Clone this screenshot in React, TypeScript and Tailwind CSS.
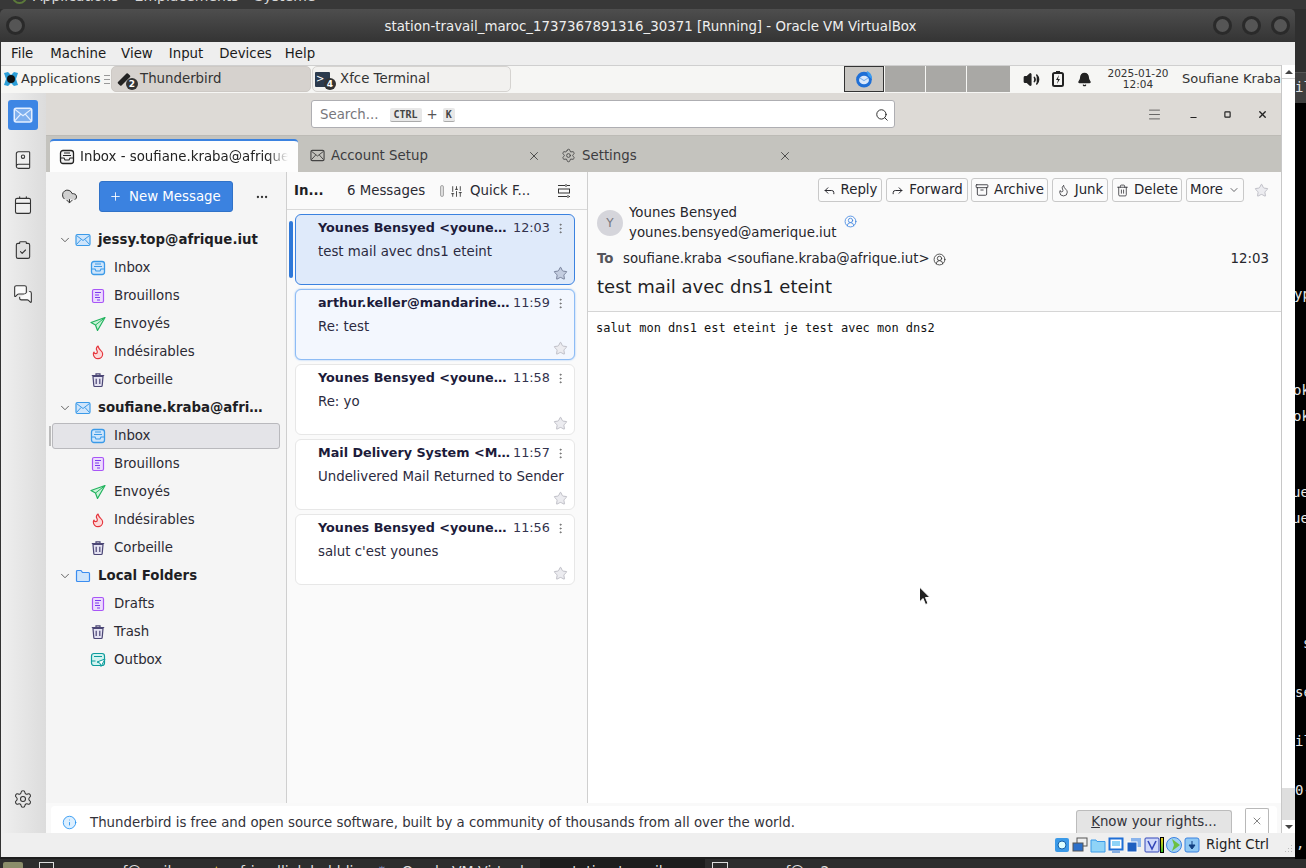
import React from 'react';
import {
  Archive, Bell, BookUser, Calendar, ChevronDown, ClipboardCheck, CloudDownload, CircleUserRound, Flame, Forward,
  Info, Menu, MessagesSquare, Minus, MoreHorizontal, MoreVertical, Plus, Reply, Search, Settings, SlidersHorizontal,
  Square, Star, Trash2, Volume2, X,
} from 'lucide-react';

const MailIcon: React.FC<{ size?: number; stroke?: string; fill?: string }> = ({ size = 16, stroke = '#3b9ae8', fill = '#cfe5fb' }) => (
  <svg width={size} height={size} viewBox="0 0 16 16" fill="none" className="shrink-0">
    <rect x="1" y="2.5" width="14" height="11" rx="1.5" fill={fill} stroke={stroke} strokeWidth="1.2" />
    <path d="M1.5 3.5 8 8.5l6.5-5M1.5 12.5 6 7.5M14.5 12.5 10 7.5" stroke={stroke} />
  </svg>
);

const InboxIcon: React.FC<{ stroke?: string; fill?: string }> = ({ stroke = '#3b9ae8', fill = '#cfe5fb' }) => (
  <svg width="16" height="16" viewBox="0 0 16 16" fill="none" className="shrink-0">
    <rect x="1.5" y="1.5" width="13" height="13" rx="2.5" fill={fill} stroke={stroke} strokeWidth="1.3" />
    <path d="M1.5 9h3.5l1 2h4l1-2h3.5M4 6.5h8M5 4h6" stroke={stroke} strokeWidth="1.1" />
  </svg>
);

const DraftIcon = () => (
  <svg width="16" height="16" viewBox="0 0 16 16" fill="none" className="shrink-0">
    <rect x="2.5" y="1.5" width="11" height="13" rx="1.5" fill="#ecdcfd" stroke="#a855f7" strokeWidth="1.2" />
    <path d="M5 4.5h6M5 7h4M5 9.5h5M7 12h3" stroke="#7c3aed" />
  </svg>
);

const SentIcon = () => (
  <svg width="16" height="16" viewBox="0 0 16 16" fill="none" className="shrink-0">
    <path d="M15 1.5 1 6.5l4.5 2.5L7.5 14.5z" fill="#c9f2d8" stroke="#22b35e" strokeWidth="1.2" strokeLinejoin="round" />
    <path d="M15 1.5 5.5 9" stroke="#22b35e" />
  </svg>
);

const JunkIcon = () => <Flame size={16} strokeWidth={1.7} color="#e5343b" fill="#fdd9d9" className="shrink-0" />;

const TrashIcon = () => (
  <svg width="16" height="16" viewBox="0 0 16 16" fill="none" className="shrink-0">
    <path d="M3 4.5h10l-.8 9a1 1 0 0 1-1 1H4.800a1 1 0 0 1-1-1z" fill="#e4e2f2" stroke="#4b4675" strokeWidth="1.2" />
    <path d="M1.800 3.500h12.400M6 3.500V1.800h4v1.700M6.200 6.800v5.200M9.800 6.800v5.200" stroke="#4b4675" strokeWidth="1.2" />
  </svg>
);

const OutboxIcon = () => (
  <svg width="16" height="16" viewBox="0 0 16 16" fill="none" className="shrink-0">
    <rect x="1.5" y="1.5" width="13" height="12" rx="2.5" fill="#d3f3f0" stroke="#0d9c9c" strokeWidth="1.2" />
    <path d="M1.5 9h4M4 4.5h8" stroke="#0d9c9c" />
    <path d="M15 7 7 10l3 1.2 1 3.3z" fill="#fff" stroke="#0d9c9c" strokeLinejoin="round" />
  </svg>
);

const FolderIcon = () => (
  <svg width="16" height="16" viewBox="0 0 16 16" fill="none" className="shrink-0">
    <path d="M1.500 3.500a1 1 0 0 1 1-1h3.500l1.500 2h6a1 1 0 0 1 1 1v7a1 1 0 0 1-1 1h-11a1 1 0 0 1-1-1z" fill="#cfe5fb" stroke="#3b8df0" strokeWidth="1.2" />
  </svg>
);

const ThunderbirdIcon = () => (
  <svg width="18" height="18" viewBox="0 0 16 16" className="shrink-0">
    <circle cx="8" cy="8.500" r="7" fill="#1f6fd6" />
    <path d="M10.500 .8c2.800 1 5 3.800 4.500 7.200L11.500 5z" fill="#3a9af0" />
    <ellipse cx="8" cy="8.800" rx="4.400" ry="3.800" fill="#dbe9fb" />
    <path d="M4.200 7 8 9.500 11.800 7" fill="none" stroke="#7fb2ea" />
  </svg>
);

const FolderRow: React.FC<{ icon: React.ReactNode; label: string; selected?: boolean }> = ({ icon, label, selected }) => (
  <div className={`flex items-center ${selected ? 'h-[26px] bg-[#e4e4e8] rounded-[3px] border border-[#b9b9bd] ml-[6px] mr-[6px] pl-[38px]' : 'h-[28px] pl-[45px]'}`}>
    <span className="w-[15px] flex justify-center mr-[9px] -ml-[1px]">{icon}</span>
    <span className="text-[13.33px] text-[#2b2a33]">{label}</span>
  </div>
);

const AccountRow: React.FC<{ icon: React.ReactNode; label: string }> = ({ icon, label }) => (
  <div className="h-[28px] flex items-center pl-[12px]">
    <ChevronDown size={14} strokeWidth={1.4} color="#444" className="mr-[3px]" />
    <span className="w-[16px] mr-[7px] flex">{icon}</span>
    <span className="text-[13.33px] font-bold text-[#1e1e24] whitespace-nowrap">{label}</span>
  </div>
);

const MessageCard: React.FC<{ from: string; time: string; subject: string; variant?: 'selected' | 'related' }> = ({ from, time, subject, variant }) => (
  <div
    className={`h-[71px] rounded-[6px] border pl-[22px] pr-[8px] pt-[4px] flex flex-col ${
      variant === 'selected'
        ? 'bg-[#dfeafa] border-[#3b82e0]'
        : variant === 'related'
          ? 'bg-[#f3f7fe] border-[#8dbcf5] shadow-[0_0_2px_#8dbcf5]'
          : 'bg-white border-[#e7e7e7]'
    }`}
  >
    <div className="h-[18px] flex items-center">
      <span className="w-[194px] shrink-0 whitespace-nowrap text-[12.75px] font-bold text-[#1c1b3a]">{from}</span>
      <span className="ml-[1px] text-[12.8px] text-[#33334d]">{time}</span>
      <MoreVertical size={13} strokeWidth={1.5} color="#666" className="ml-auto -mr-[1px]" />
    </div>
    <div className="mt-[6px] text-[13.33px] leading-[18px] text-[#2b2a40] whitespace-nowrap">{subject}</div>
    <div className="mt-auto mb-[3px] -mr-[2px] flex justify-end">
      <Star size={15} strokeWidth={1.3} color={variant === 'selected' ? '#66708a' : '#b4b4bc'} fill={variant === 'selected' ? '#c3cde0' : '#ececf0'} />
    </div>
  </div>
);

const HeaderButton: React.FC<{ icon?: React.ReactNode; label: string; width: string; after?: React.ReactNode }> = ({ icon, label, width, after }) => (
  <div className={`${width} h-[24px] border border-[#c9c9c9] rounded-[3px] bg-[#fbfbfb] flex items-center justify-center gap-[5px] text-[13.33px] text-[#26262c]`}>
    {icon}
    <span>{label}</span>
    {after}
  </div>
);

const VBoxIcon: React.FC<{ children: React.ReactNode }> = ({ children }) => (
  <svg width="16" height="16" viewBox="0 0 16 16" fill="none" className="shrink-0">{children}</svg>
);

const termLines: { gap: string; text: string; indent?: string }[] = [
  { gap: 'mt-[183px]', text: 'yp', indent: '-ml-[1px]' },
  { gap: 'mt-[79px]', text: 'ok', indent: '-ml-[2px]' },
  { gap: 'mt-[9px]', text: 'ok', indent: '-ml-[2px]' },
  { gap: 'mt-[59px]', text: 'ue', indent: '-ml-[3px]' },
  { gap: 'mt-[9px]', text: 'ue', indent: '-ml-[3px]' },
  { gap: 'mt-[108px]', text: 's', indent: 'ml-[8px]' },
  { gap: 'mt-[32px]', text: 'se' },
  { gap: 'mt-[32px]', text: 'il' },
  { gap: 'mt-[32px]', text: '0-' },
  { gap: 'mt-[36px]', text: ',', indent: 'ml-[1px]' },
];

export default function App() {
  return (
    <div className="w-[1306px] h-[868px] overflow-hidden flex flex-col bg-[#2f2f2f] font-['DejaVu_Sans',sans-serif]">
      {/* host top panel, almost entirely cut off */}
      <div className="h-[9px] shrink-0 overflow-hidden bg-[#383838]">
        <div className="-mt-[12px] pl-[12px] flex items-center gap-[6px] text-[14px] text-[#d8d8d8] leading-[16px]">
          <span className="w-[15px] h-[15px] rounded-full border-2 border-[#5c7a3a]" />
          <span>Applications</span>
          <span className="ml-[10px]">Emplacements</span>
          <span className="ml-[10px]">Système</span>
        </div>
      </div>

      <div className="flex flex-1 min-h-0">
        {/* VirtualBox window */}
        <div className="w-[1295px] shrink-0 flex flex-col">
          <div className="h-[33px] shrink-0 rounded-t-[5px] bg-gradient-to-b from-[#4e4e4e] to-[#343434] flex items-center pl-[6px] pr-[5px]">
            <span className="w-[19px] h-[19px] rounded-full bg-[#555] border-[3px] border-[#2a2a2a]" />
            <div className="flex-1 text-center text-[13.37px] font-medium text-[#efefef] pl-[63px] pt-[3px]">
              station-travail_maroc_1737367891316_30371 [Running] - Oracle VM VirtualBox
            </div>
            <div className="flex gap-[10px]">
              <span className="w-[19px] h-[19px] rounded-full bg-[#555] border-[3px] border-[#2a2a2a]" />
              <span className="w-[19px] h-[19px] rounded-full bg-[#555] border-[3px] border-[#2a2a2a]" />
              <span className="w-[19px] h-[19px] rounded-full bg-[#555] border-[3px] border-[#2a2a2a]" />
            </div>
          </div>

          <div className="h-[23px] shrink-0 bg-[#eeeeee] border-l border-[#333] pl-[10px] pt-[1px] flex items-center gap-[16px] text-[13.33px] text-[#1a1a1a]">
            <span>File</span>
            <span className="ml-[1px]">Machine</span>
            <span className="-ml-[1px]">View</span>
            <span>Input</span>
            <span>Devices</span>
            <span className="-ml-[3px]">Help</span>
          </div>

          <div className="h-[768px] shrink-0 flex border-l border-[#333]">
            {/* guest screen */}
            <div className="w-[1280px] shrink-0 flex flex-col bg-[#f5f5f5]">
              {/* xfce panel */}
              <div className="h-[28px] shrink-0 bg-[#f6f6f4] border-t border-[#cfcfcf] pb-[1px] flex items-center text-[#333] overflow-hidden">
                <svg width="16" height="16" viewBox="0 0 16 16" className="ml-[2px] shrink-0">
                  <path d="M1 2 5 1l3 3 3-3 4 1-2 6 2 6-4 1-3-3-3 3-4-1 2-6z" fill="#2b9ed8" />
                  <circle cx="8" cy="8" r="4" fill="#111" />
                </svg>
                <span className="ml-[2px] w-[79px] shrink-0 text-[13px] whitespace-nowrap">Applications</span>
                <span className="ml-[4px] w-[6px] h-[9px] shrink-0 border-y border-[#999] flex items-center"><span className="w-full h-px bg-[#999]" /></span>
                <div className="ml-[1px] w-[200px] h-[26px] shrink-0 bg-[#d6d2ce] border border-[#cdc9c5] rounded-[5px] flex items-center pl-[5px] text-[13.33px]">
                  <span className="relative w-[20px] h-[20px] flex items-center">
                    <span className="w-[14px] h-[5px] bg-[#222] -rotate-45 rounded-[1px]" />
                    <span className="absolute right-[-1px] bottom-[-1px] w-[12px] h-[12px] rounded-full bg-[#333] text-white text-[9px] font-bold leading-[12px] text-center">2</span>
                  </span>
                  <span className="ml-[3px]">Thunderbird</span>
                </div>
                <div className="ml-[1px] w-[199px] h-[26px] shrink-0 bg-[#f2f1ef] border border-[#d5d3d0] rounded-[5px] flex items-center pl-[2px] text-[13.33px]">
                  <span className="relative w-[20px] h-[20px] flex items-center">
                    <span className="w-[15px] h-[15px] bg-[#2b3a4d] rounded-[1px] text-white text-[10px] leading-[14px] pl-[1px]">&gt;</span>
                    <span className="absolute right-[-1px] bottom-[-1px] w-[12px] h-[12px] rounded-full bg-[#333] text-white text-[9px] font-bold leading-[12px] text-center">4</span>
                  </span>
                  <span className="ml-[5px]">Xfce Terminal</span>
                </div>
                <div className="ml-[333px] flex h-[26px] shrink-0">
                  <div className="w-[40px] bg-[#c8c6c2] border border-[#333] flex items-center justify-center"><ThunderbirdIcon /></div>
                  <div className="ml-[1px] w-[40px] bg-[#a9a8a5]" />
                  <div className="ml-[1px] w-[40px] bg-[#a9a8a5]" />
                  <div className="ml-[1px] w-[43px] bg-[#a9a8a5]" />
                </div>
                <Volume2 size={17} strokeWidth={2.2} color="#222" fill="#222" className="ml-[13px] shrink-0" />
                <svg width="14" height="18" viewBox="0 0 14 18" fill="none" className="ml-[11px] shrink-0">
                  <rect x="2" y="3" width="10" height="13" rx="1.5" stroke="#222" strokeWidth="2" />
                  <path d="M5 1h4v2H5z" fill="#222" />
                  <path d="M8 5 5 10h2l-1 4 3-5H7z" fill="#222" />
                </svg>
                <Bell size={15} strokeWidth={2} color="#222" fill="#222" className="ml-[12px] shrink-0" />
                <div className="ml-[14px] w-[64px] shrink-0 text-center text-[10.5px] leading-[11.5px] text-[#333]">
                  <div>2025-01-20</div>
                  <div>12:04</div>
                </div>
                <span className="ml-[12px] text-[13px] whitespace-nowrap">Soufiane Kraba</span>
              </div>

              <div className="flex-1 min-h-0 flex">
                {/* spaces bar */}
                <div className="w-[45px] shrink-0 bg-gradient-to-r from-[#efefef] to-[#dcdcdc] flex flex-col items-center pt-[7px] pb-[24px] pr-[1px]">
                  <div className="w-[30px] h-[30px] rounded-[3px] bg-[#3d86e4] flex items-center justify-center">
                    <MailIcon size={20} stroke="#e4efff" fill="#7fb0ee" />
                  </div>
                  <BookUser size={20} strokeWidth={1.3} color="#333" fill="#efefef" className="mt-[20px]" />
                  <Calendar size={20} strokeWidth={1.3} color="#333" fill="#efefef" className="mt-[25px]" />
                  <ClipboardCheck size={20} strokeWidth={1.3} color="#333" fill="#dedede" className="mt-[25px]" />
                  <MessagesSquare size={20} strokeWidth={1.3} color="#333" fill="#fafafa" className="mt-[24px]" />
                  <Settings size={20} strokeWidth={1.3} color="#333" className="mt-auto" />
                </div>

                {/* thunderbird window */}
                <div className="flex-1 min-w-0 flex flex-col">
                  <div className="h-[43px] shrink-0 bg-[#dddad6] flex items-center pl-[265px] border-b border-[#bdbbb6]">
                    <div className="w-[584px] h-[28px] bg-white border border-[#aeaeb2] rounded-[3px] flex items-center pl-[8px] pr-[5px] pt-[1px] text-[13.33px] text-[#77777c]">
                      <span>Search...</span>
                      <span className="ml-[11px] h-[14px] px-[4px] bg-[#e8e8e8] border-b border-[#aaa] rounded-[2px] text-[10px] font-bold leading-[14px] text-[#444] font-['DejaVu_Sans_Mono',monospace]">CTRL</span>
                      <span className="mx-[5px] text-[#555]">+</span>
                      <span className="h-[14px] px-[3px] bg-[#e8e8e8] border-b border-[#aaa] rounded-[2px] text-[10px] font-bold leading-[14px] text-[#444] font-['DejaVu_Sans_Mono',monospace]">K</span>
                      <Search size={14} strokeWidth={1.6} color="#222" className="ml-auto" />
                    </div>
                    <Menu size={15} strokeWidth={1} color="#222" className="ml-[252px]" />
                    <Minus size={9} strokeWidth={3} color="#222" className="ml-[27px] mt-[7px]" />
                    <Square size={7} strokeWidth={4} color="#222" className="ml-[26px]" />
                    <X size={11} strokeWidth={3} color="#222" className="ml-[26px]" />
                  </div>

                  {/* tab bar */}
                  <div className="h-[36px] shrink-0 bg-[#c4c3be] flex items-end pl-[4px] text-[13.33px] text-[#3c3c40]">
                    <div className="w-[248px] h-[33px] bg-[#fdfdfd] rounded-t-[4px] border-t-[2px] border-[#3b82e0] flex items-center pl-[9px] overflow-hidden">
                      <InboxIcon stroke="#222" fill="#f1f1f1" />
                      <span className="ml-[5px] w-[208px] overflow-hidden whitespace-nowrap text-[#222] [mask-image:linear-gradient(to_right,black_90%,transparent)]">Inbox - soufiane.kraba@afrique</span>
                    </div>
                    <div className="w-[251px] h-[33px] flex items-center pl-[12px]">
                      <MailIcon size={15} stroke="#444" fill="none" />
                      <span className="ml-[6px]">Account Setup</span>
                      <X size={14} strokeWidth={1.4} color="#333" className="ml-auto mr-[8px]" />
                    </div>
                    <div className="w-[251px] h-[33px] flex items-center pl-[12px]">
                      <Settings size={15} strokeWidth={1.4} color="#444" />
                      <span className="ml-[6px]">Settings</span>
                      <X size={14} strokeWidth={1.4} color="#333" className="ml-auto mr-[8px]" />
                    </div>
                  </div>

                  <div className="flex-1 min-h-0 flex">
                    {/* folder pane */}
                    <div className="w-[241px] shrink-0 bg-[#f5f5f5] border-r border-[#cfcfcf]">
                      <div className="h-[49px] mb-[5px] flex items-center pl-[15px]">
                        <CloudDownload size={17} strokeWidth={1.4} color="#333" fill="#d0d0d0" />
                        <div className="ml-[21px] w-[134px] h-[31px] rounded-[3px] bg-[#3b82e0] border border-[#3072c8] flex items-center pl-[9px] text-white text-[13.33px]">
                          <Plus size={13} strokeWidth={1.6} />
                          <span className="ml-[7px]">New Message</span>
                        </div>
                        <MoreHorizontal size={14} strokeWidth={2} color="#333" className="ml-[22px]" />
                      </div>
                      <AccountRow icon={<MailIcon />} label="jessy.top@afrique.iut" />
                      <FolderRow icon={<InboxIcon />} label="Inbox" />
                      <FolderRow icon={<DraftIcon />} label="Brouillons" />
                      <FolderRow icon={<SentIcon />} label="Envoyés" />
                      <FolderRow icon={<JunkIcon />} label="Indésirables" />
                      <FolderRow icon={<TrashIcon />} label="Corbeille" />
                      <AccountRow icon={<MailIcon />} label="soufiane.kraba@afri…" />
                      <div className="flex items-center h-[28px]">
                        <span className="ml-[3px] w-[2px] h-[20px] bg-[#bbb] -mr-[5px]" />
                        <div className="flex-1"><FolderRow icon={<InboxIcon />} label="Inbox" selected /></div>
                      </div>
                      <FolderRow icon={<DraftIcon />} label="Brouillons" />
                      <FolderRow icon={<SentIcon />} label="Envoyés" />
                      <FolderRow icon={<JunkIcon />} label="Indésirables" />
                      <FolderRow icon={<TrashIcon />} label="Corbeille" />
                      <AccountRow icon={<FolderIcon />} label="Local Folders" />
                      <FolderRow icon={<DraftIcon />} label="Drafts" />
                      <FolderRow icon={<TrashIcon />} label="Trash" />
                      <FolderRow icon={<OutboxIcon />} label="Outbox" />
                    </div>

                    {/* message list */}
                    <div className="w-[301px] shrink-0 bg-[#fafafa] border-r border-[#cfcfcf] flex flex-col">
                      <div className="h-[38px] shrink-0 border-b border-[#d9d9d9] flex items-center pl-[7px] pt-[1px] text-[13.33px] text-[#2b2a33]">
                        <span className="font-bold text-[#1e1e24] w-[46px]">In...</span>
                        <span className="ml-[7px]">6 Messages</span>
                        <span className="ml-[15px] w-[4px] h-[12px] rounded-[2px] bg-[#ddd] border border-[#aaa]" />
                        <SlidersHorizontal size={13} strokeWidth={1.6} color="#333" className="ml-[6px] rotate-90" />
                        <span className="ml-[7px]">Quick F...</span>
                        <svg width="14" height="14" viewBox="0 0 14 14" fill="none" stroke="#333" className="ml-[27px]">
                          <path d="M1 1.500h7M10 1.500h3M1 12.500h9M12 12.500h1" />
                          <rect x="1.500" y="5" width="11" height="4" />
                          <path d="M9 0v3M11 11v3" />
                        </svg>
                      </div>
                      <div className="flex-1 pl-[8px] pr-[12px] pt-[4px] flex flex-col gap-[4px] relative">
                        <span className="absolute left-[2px] top-[11px] w-[4px] h-[57px] rounded-[2px] bg-[#2f78d8]" />
                        <MessageCard variant="selected" from="Younes Bensyed <youne…" time="12:03" subject="test mail avec dns1 eteint" />
                        <MessageCard variant="related" from="arthur.keller@mandarine…" time="11:59" subject="Re: test" />
                        <MessageCard from="Younes Bensyed <youne…" time="11:58" subject="Re: yo" />
                        <MessageCard from="Mail Delivery System <M…" time="11:57" subject="Undelivered Mail Returned to Sender" />
                        <MessageCard from="Younes Bensyed <youne…" time="11:56" subject="salut c'est younes" />
                      </div>
                    </div>

                    {/* message pane */}
                    <div className="flex-1 min-w-0 flex flex-col bg-white">
                      <div className="h-[140px] shrink-0 bg-[#fafafa] border-b border-[#d5d5d5] pl-[9px] pr-[12px] pt-[6px] text-[#26262c]">
                        <div className="flex justify-end items-center gap-[4px]">
                          <HeaderButton width="w-[64px]" icon={<Reply size={13} strokeWidth={1.8} />} label="Reply" />
                          <HeaderButton width="w-[82px]" icon={<Forward size={13} strokeWidth={1.8} />} label="Forward" />
                          <HeaderButton width="w-[77px] -ml-[1px]" icon={<Archive size={14} strokeWidth={1.4} />} label="Archive" />
                          <HeaderButton width="w-[56px]" icon={<Flame size={13} strokeWidth={1.4} />} label="Junk" />
                          <HeaderButton width="w-[70px]" icon={<Trash2 size={13} strokeWidth={1.4} />} label="Delete" />
                          <HeaderButton width="w-[58px]" label="More" after={<ChevronDown size={12} strokeWidth={1.4} />} />
                          <Star size={15} strokeWidth={1.3} color="#b4b4bc" fill="#ececf0" className="ml-[6px]" />
                        </div>
                        <div className="flex items-center mt-[1px]">
                          <div className="w-[26px] h-[26px] rounded-full bg-[#d5d5db] text-[#77777f] text-[12px] flex items-center justify-center">Y</div>
                          <div className="ml-[6px] text-[13.33px] leading-[19.5px]">
                            <div>Younes Bensyed</div>
                            <div>younes.bensyed@amerique.iut</div>
                          </div>
                          <CircleUserRound size={13} strokeWidth={1.5} color="#3b82e0" className="ml-[7px] -mt-[2px]" />
                        </div>
                        <div className="flex items-center mt-[8px] text-[13.33px] h-[18px]">
                          <span className="font-bold text-[#55555c] w-[26px]">To</span>
                          <span>soufiane.kraba &lt;soufiane.kraba@afrique.iut&gt;</span>
                          <CircleUserRound size={13} strokeWidth={1.5} color="#333" className="ml-[3px]" />
                          <span className="ml-auto">12:03</span>
                        </div>
                        <div className="mt-[7px] text-[18px] leading-[24px] text-[#1e1e24]">test mail avec dns1 eteint</div>
                      </div>
                      <div className="pl-[8px] pt-[9px] font-['DejaVu_Sans_Mono',monospace] text-[11.97px] leading-[15px] text-[#111]">
                        salut mon dns1 est eteint je test avec mon dns2
                      </div>
                      <div className="flex-1 flex items-end justify-end">
                        {/* mouse pointer */}
                        <svg width="14" height="20" viewBox="0 0 14 20" className="mb-[197px] mr-[349px]">
                          <path d="M1.5 1v15l3.5-3.5 2.5 6 2.500-1-2.500-6H12z" fill="#222" stroke="#fff" />
                        </svg>
                      </div>
                    </div>
                  </div>

                  {/* notification bar */}
                  <div className="h-[30px] shrink-0 bg-[#f9f9f9] pl-[5px] pr-[4px] flex items-end">
                    <div className="w-full h-[27px] bg-white rounded-t-[4px] flex items-center pl-[11px] pr-[8px] text-[13.33px] text-[#33333a]">
                      <Info size={15} strokeWidth={1.3} color="#1c8ef0" fill="#dcefff" className="mt-[6px]" />
                      <span className="ml-[13px] mt-[6px]">Thunderbird is free and open source software, built by a community of thousands from all over the world.</span>
                      <div className="ml-auto h-[23px] mt-[4px] w-[156px] bg-[#e4e4e4] border border-[#bcbcbc] border-b-0 rounded-t-[3px] flex items-center justify-center">
                        <span><span className="underline">K</span>now your rights...</span>
                      </div>
                      <div className="ml-[13px] h-[25px] mt-[2px] w-[24px] bg-white border border-[#b8b8b8] border-b-0 rounded-t-[2px] flex items-center justify-center">
                        <X size={12} strokeWidth={1.2} color="#333" />
                      </div>
                    </div>
                  </div>
                </div>
              </div>
            </div>

            {/* vbox scrollbar */}
            <div className="flex-1 bg-white border-l border-[#c8c8c8] flex flex-col">
              <div className="h-[14px] border-b border-[#d0d0d0] flex items-center justify-center">
                <span className="w-0 h-0 border-x-[4px] border-x-transparent border-b-[4px] border-b-[#444]" />
              </div>
              <div className="flex-1" />
              <div className="h-[32px] bg-[#dedede]" />
              <div className="h-[13px] flex items-center justify-center">
                <span className="w-0 h-0 border-x-[4px] border-x-transparent border-t-[4px] border-t-[#444]" />
              </div>
            </div>
          </div>

          {/* vbox status bar */}
          <div className="h-[24px] shrink-0 bg-[#efefef] border-l border-[#333] flex items-center pl-[1053px] gap-[2px] text-[13.33px] text-[#222]">
            <VBoxIcon><rect x="1" y="1" width="14" height="14" rx="2" fill="#3b9ae8" /><circle cx="8" cy="8" r="4" fill="#dff" stroke="#1560a8" /></VBoxIcon>
            <VBoxIcon><rect x="5" y="1" width="10" height="8" fill="#eee" stroke="#555" /><rect x="1" y="6" width="10" height="8" fill="#2c6fc9" stroke="#555" /></VBoxIcon>
            <VBoxIcon><path d="M1 3h5l1 1.500h8V15H1z" fill="#8fd3f7" stroke="#3b9ae8" /></VBoxIcon>
            <VBoxIcon><rect x="1.500" y="1.500" width="13" height="11" fill="#fff" stroke="#1f6fd6" strokeWidth="2" /><rect x="4" y="4" width="8" height="5" fill="#8fd3f7" /><path d="M4 15h8" stroke="#1f6fd6" /></VBoxIcon>
            <VBoxIcon><rect x="5" y="1" width="10" height="9" fill="#8ab4ec" /><rect x="1" y="5" width="10" height="10" fill="#1f5fc0" stroke="#fff" /></VBoxIcon>
            <span className="flex items-center">
              <VBoxIcon><rect x="1" y="1" width="14" height="14" rx="1" fill="#cfd8fa" stroke="#3346b8" /><path d="M4 4l4 8 4-8" stroke="#3346b8" strokeWidth="1.6" /></VBoxIcon>
              <span className="w-[4px] h-[16px] bg-gradient-to-b from-[#e8d020] to-[#20c020] border border-black" />
            </span>
            <VBoxIcon><circle cx="8" cy="8" r="7.500" fill="#9ed0f4" stroke="#3b82e0" /><path d="M6 2l8 6-8 6 2-6z" fill="#6cc040" /></VBoxIcon>
            <VBoxIcon><rect x="1" y="1" width="14" height="14" rx="2" fill="#8fc8f4" stroke="#3b82e0" /><path d="M8 4v4M5 8h6l-3 4z" fill="#113f80" stroke="#113f80" /></VBoxIcon>
            <span className="ml-[4px]">Right Ctrl</span>
            <svg width="10" height="10" viewBox="0 0 10 10" className="ml-auto mr-[2px] mt-[9px]" fill="#bbb">
              <rect x="8" y="0" width="1" height="1" /><rect x="5" y="3" width="1" height="1" /><rect x="8" y="3" width="1" height="1" />
              <rect x="2" y="6" width="1" height="1" /><rect x="5" y="6" width="1" height="1" /><rect x="8" y="6" width="1" height="1" />
            </svg>
          </div>
          <div className="h-[2px] shrink-0 bg-[#1e1e1e]" />
        </div>

        {/* host terminal behind the window */}
        <div className="flex-1 min-w-0 overflow-hidden flex flex-col">
          <div className="h-[64px] shrink-0 bg-[#2f2f2f] border-b border-[#555]" />
          <div className="h-[30px] shrink-0 bg-[#3f3f3f] text-[14px] leading-[28px] text-[#e0e0e0] font-['DejaVu_Sans_Mono',monospace] whitespace-nowrap">il:</div>
          <div className="flex-1 bg-black text-[14px] leading-[17px] text-[#e6e6e6] font-['DejaVu_Sans_Mono',monospace] whitespace-nowrap">
            {termLines.map((l, i) => (
              <div key={i} className={`${l.gap} ${l.indent ?? ''}`}>{l.text}</div>
            ))}
          </div>
        </div>
      </div>

      {/* host taskbar, cut by the bottom edge */}
      <div className="h-[9px] shrink-0 overflow-hidden bg-[#2d2d2d] flex text-[14px] leading-[18px] text-[#dedede] pt-[3px] whitespace-nowrap">
        <span className="ml-[3px] w-[20px] h-[12px] bg-[#8b8d6a] rounded-t-[2px]" />
        <span className="ml-[16px] w-[15px] h-[12px] border border-[#ddd]" />
        <span className="ml-[6px] w-[150px] pl-[15px]">moncef@mail</span>
        <span className="text-[#e8c53a] w-[30px]">★</span>
        <span className="w-[136px]">friendlink bubbline</span>
        <span className="text-[#8090c0] w-[26px]">✹</span>
        <span className="w-[138px]">Oracle VM Virtual</span>
        <span className="w-[165px] bg-[#1d1d1d] -mt-[3px] pt-[3px] pl-[25px]">station-travail</span>
        <span className="ml-[7px] w-[16px] h-[12px] border border-[#ddd]" />
        <span className="ml-[10px]">moncef@ns2</span>
      </div>
    </div>
  );
}
